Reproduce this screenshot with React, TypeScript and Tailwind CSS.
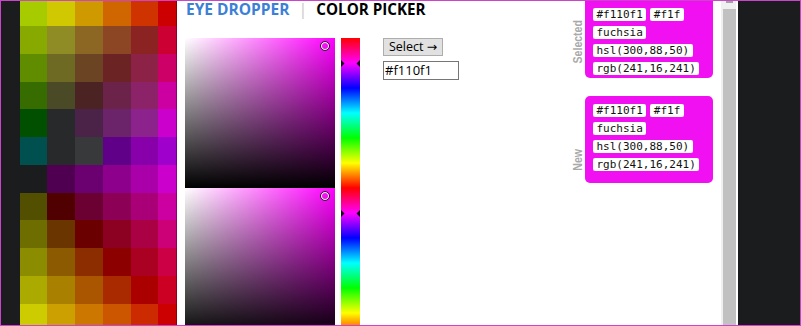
import React from "react";

const grid: string[][] = [
  ["#a6cc00", "#d0c800", "#cf9900", "#cf6600", "#cf3300", "#cc0000"],
  ["#88aa00", "#8f8c26", "#8c6623", "#8c4623", "#8c2323", "#cc0033"],
  ["#608c00", "#6e6a24", "#6b4523", "#6b2323", "#8c2346", "#cc0066"],
  ["#366c00", "#4a4a26", "#4b2323", "#6b2349", "#8c2369", "#cc00a0"],
  ["#005000", "#28292b", "#4b2349", "#6b2369", "#8c238c", "#cc00cc"],
  ["#005050", "#28292b", "#38393b", "#600088", "#8800aa", "#a000cc"],
  ["#1b1c1e", "#500050", "#6b0070", "#8c008c", "#aa00aa", "#cc00cc"],
  ["#525000", "#500000", "#6b0033", "#8c0055", "#aa0077", "#cc00a0"],
  ["#6e6e00", "#6b3500", "#6b0000", "#8c0022", "#aa0044", "#cc0077"],
  ["#8c8c00", "#8c5a00", "#8c2d00", "#8c0000", "#aa0022", "#cc0044"],
  ["#aaaa00", "#aa8000", "#aa5500", "#aa2a00", "#aa0000", "#cc0022"],
  ["#cccc00", "#cca000", "#cc7700", "#cc5500", "#cc2a00", "#cc0000"],
];

function Chip({ t }: { t: string }) {
  return (
    <span className="bg-white rounded-[2px] px-[3.5px] h-[13px] leading-[13px] text-[11px] text-[#111] font-['DejaVu_Sans_Mono',monospace] whitespace-nowrap">
      {t}
    </span>
  );
}

function Chips() {
  return (
    <div className="flex flex-wrap gap-x-[4px] gap-y-[5px]">
      <Chip t="#f110f1" />
      <Chip t="#f1f" />
      <Chip t="fuchsia" />
      <Chip t="hsl(300,88,50)" />
      <Chip t="rgb(241,16,241)" />
    </div>
  );
}

function SVSquare() {
  return (
    <div
      className="relative w-[150px] h-[150px] shrink-0"
      style={{
        background:
          "linear-gradient(to top, #000, rgba(0,0,0,0)), linear-gradient(to right, #fff, #ff00ff)",
      }}
    >
      <div className="absolute left-[135px] top-[3px] w-[10px] h-[10px] rounded-full border border-[#222] shadow-[inset_0_0_0_1px_#fff]" />
    </div>
  );
}

function HueBar() {
  return (
    <div
      className="relative w-[19px] h-[150px] shrink-0"
      style={{
        background:
          "linear-gradient(to bottom, #f00 0%, #f0f 16.67%, #00f 33.33%, #0ff 50%, #0f0 66.67%, #ff0 83.33%, #f00 100%)",
      }}
    >
      <svg className="absolute left-0 top-[22px]" width="19" height="7" viewBox="0 0 19 7">
        <polygon points="0,0 3.5,3.5 0,7" fill="#111" />
        <polygon points="19,0 15.5,3.5 19,7" fill="#111" />
      </svg>
    </div>
  );
}

export default function App() {
  return (
    <div className="w-[801px] h-[326px] border border-[#cc44cc] flex overflow-hidden bg-[#1b1c1e] font-['Open_Sans',sans-serif]">
      {/* left dark strip */}
      <div className="w-[19px] shrink-0 bg-[#1b1c1e]" />
      {/* color grid */}
      <div className="w-[157px] shrink-0 grid grid-cols-[27px_28px_28px_28px_27px_19px] grid-rows-[25px_28px_28px_27px_28px_28px_28px_27px_28px_28px_28px_21px]">
        {grid.map((row, r) =>
          row.map((c, i) => (
            <div
              key={r + "-" + i}
              className={i === 5 ? "border-r border-black/30" : ""}
              style={{ backgroundColor: c }}
            />
          ))
        )}
      </div>
      {/* white main panel */}
      <div className="w-[544px] shrink-0 bg-white flex">
        <div className="flex-1 flex flex-col overflow-hidden">
          <div className="h-[37px] shrink-0 pl-[9px] flex items-start">
            <div className="flex items-center leading-[17px] text-[15.5px] font-bold">
              <span className="text-[#3b80d6]">EYE DROPPER</span>
              <span className="ml-[9px] mr-[9px] text-[#c8c8c8] font-normal text-[16px] leading-[17px]">|</span>
              <span className="text-black text-[15.2px]">COLOR PICKER</span>
            </div>
          </div>
          <div className="flex shrink-0 pl-[8px]">
            <div className="flex flex-col">
              <SVSquare />
              <SVSquare />
            </div>
            <div className="ml-[6px] flex flex-col">
              <HueBar />
              <HueBar />
            </div>
            <div className="ml-[23px] flex flex-col items-start gap-[5px]">
              <button className="w-[60px] h-[18px] bg-[#e1e1e1] border border-[#adadad] text-[12.5px] leading-[16px] text-black font-['Open_Sans','DejaVu_Sans',sans-serif]">
                Select →
              </button>
              <div className="w-[76px] h-[19px] border border-[#767676] pl-[1px] text-[13px] leading-[17px] text-black font-['Open_Sans',sans-serif]">
                #f110f1
              </div>
            </div>
          </div>
        </div>
        {/* right panels */}
        <div className="flex flex-col pr-[8px] gap-[18px]">
          <div className="flex items-end">
            <div className="w-[15px] pb-[8px] flex justify-center">
              <span className="[writing-mode:vertical-rl] rotate-180 scale-y-[0.78] text-[13.5px] leading-[12px] font-bold text-[#a9a9a9] font-['Liberation_Sans',sans-serif]">
                Selected
              </span>
            </div>
            <div className="w-[128px] bg-[#f110f1] rounded-b-[5px] pt-[7px] pb-[3px] px-[8px]">
              <Chips />
            </div>
          </div>
          <div className="flex items-end">
            <div className="w-[15px] pb-[9px] flex justify-center">
              <span className="[writing-mode:vertical-rl] rotate-180 scale-y-[0.78] text-[13.5px] leading-[12px] font-bold text-[#a9a9a9] font-['Liberation_Sans',sans-serif]">
                New
              </span>
            </div>
            <div className="w-[128px] bg-[#f110f1] rounded-[5px] pt-[8px] pb-[12px] px-[8px]">
              <Chips />
            </div>
          </div>
        </div>
      </div>
      {/* scrollbar */}
      <div className="w-[15px] shrink-0 bg-[#f0f0f0] pl-[2px] flex flex-col">
        <div className="h-[8px] flex justify-center">
          <div className="w-[7px] h-[2px] bg-[#a3a3a3]" />
        </div>
        <div className="w-[13px] flex-1 bg-[#c1c1c1]" />
      </div>
      <div className="w-[2px] shrink-0 bg-white" />
      {/* dark right area */}
      <div className="flex-1 bg-[#1b1c1e]" />
    </div>
  );
}
